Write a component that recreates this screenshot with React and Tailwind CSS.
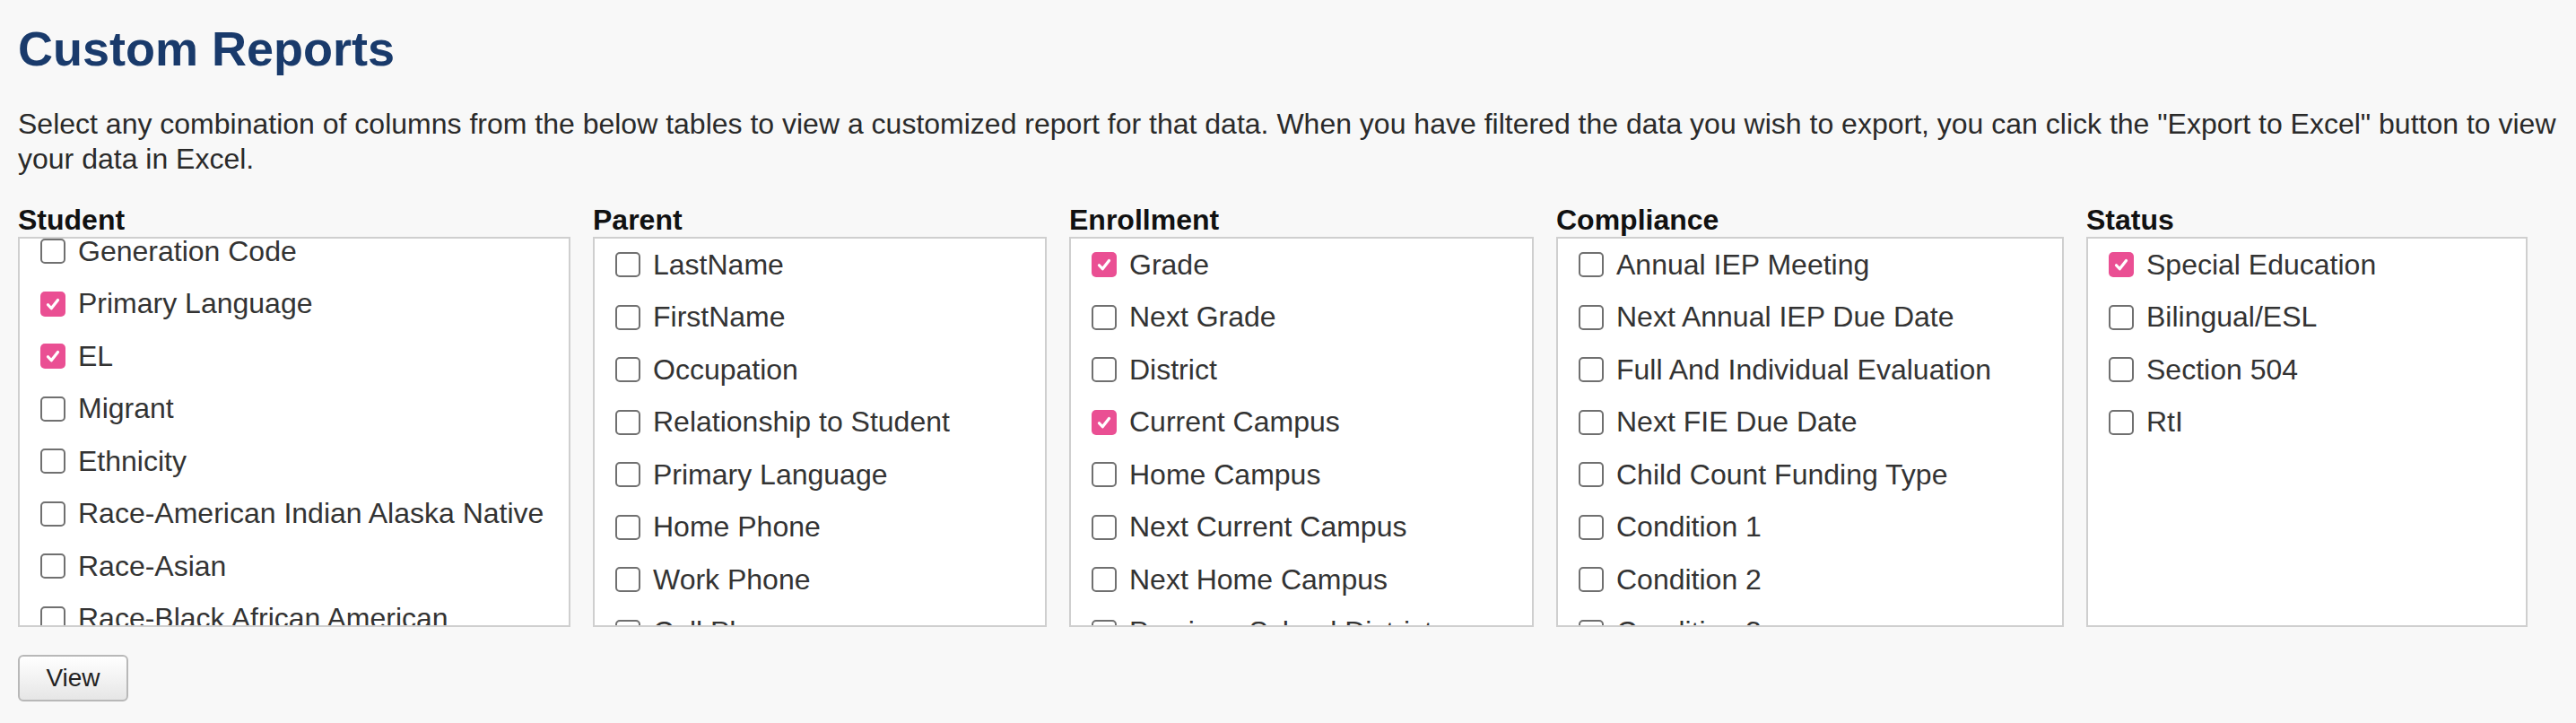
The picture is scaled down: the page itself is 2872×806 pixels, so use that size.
const columns = [
  {
    title: 'Student',
    width: 'w-[616px]',
    scrolled: true,
    items: [
      ['Generation Code', false],
      ['Primary Language', true],
      ['EL', true],
      ['Migrant', false],
      ['Ethnicity', false],
      ['Race-American Indian Alaska Native', false],
      ['Race-Asian', false],
      ['Race-Black African American', false],
      ['Race-Native Hawaiian Pacific Islander', false],
      ['Race-White', false],
    ],
  },
  {
    title: 'Parent',
    width: 'w-[506px]',
    items: [
      ['LastName', false],
      ['FirstName', false],
      ['Occupation', false],
      ['Relationship to Student', false],
      ['Primary Language', false],
      ['Home Phone', false],
      ['Work Phone', false],
      ['Cell Phone', false],
      ['Email', false],
    ],
  },
  {
    title: 'Enrollment',
    width: 'w-[518px]',
    items: [
      ['Grade', true],
      ['Next Grade', false],
      ['District', false],
      ['Current Campus', true],
      ['Home Campus', false],
      ['Next Current Campus', false],
      ['Next Home Campus', false],
      ['Previous School District', false],
      ['Entry Date', false],
    ],
  },
  {
    title: 'Compliance',
    width: 'w-[566px]',
    items: [
      ['Annual IEP Meeting', false],
      ['Next Annual IEP Due Date', false],
      ['Full And Individual Evaluation', false],
      ['Next FIE Due Date', false],
      ['Child Count Funding Type', false],
      ['Condition 1', false],
      ['Condition 2', false],
      ['Condition 3', false],
      ['Condition 4', false],
    ],
  },
  {
    title: 'Status',
    width: 'w-[492px]',
    items: [
      ['Special Education', true],
      ['Bilingual/ESL', false],
      ['Section 504', false],
      ['RtI', false],
    ],
  },
];

function Check({ checked }) {
  if (checked) {
    return (
      <span className="flex h-[28px] w-[28px] shrink-0 items-center justify-center rounded-[5px] bg-[#ea4f93]">
        <svg viewBox="0 0 16 16" className="h-[20px] w-[20px]" fill="none" stroke="white" strokeWidth="2.6" strokeLinecap="round" strokeLinejoin="round">
          <path d="M3.6 8.6l3 3.2 5.8-7.4" />
        </svg>
      </span>
    );
  }
  return <span className="h-[28px] w-[28px] shrink-0 rounded-[5px] border-2 border-[#707070] bg-white" />;
}

function Column({ col }) {
  return (
    <div className={col.width}>
      <h3 className="text-[32px] font-bold leading-[37px] text-[#111]">{col.title}</h3>
      <div className="h-[435px] overflow-hidden border-2 border-[#cfcfcf] bg-white">
        {/* student list is scrolled down a little in the original */}
        <div className={col.scrolled ? '-mt-[15px]' : ''}>
          {col.items.map(([label, checked]) => (
            <label key={label} className="flex h-[58.5px] items-center gap-[14px] whitespace-nowrap pl-[23px] text-[32px] leading-[37px] text-[#333]">
              <Check checked={checked} />
              {label}
            </label>
          ))}
        </div>
      </div>
    </div>
  );
}

export default function App() {
  return (
    <div className="min-h-screen bg-[#f8f8f8] px-[20px] pt-[24px] font-['Liberation_Sans',Arial,sans-serif]">
      <h1 className="text-[54px] font-bold leading-[60px] text-[#193a6b]">Custom Reports</h1>
      <p className="mt-[35px] w-[2850px] whitespace-nowrap text-[32px] leading-[38.5px] text-[#2a2a2a]">
        Select any combination of columns from the below tables to view a customized report for that data. When you have filtered the data you wish to export, you can click the "Export to Excel" button to view
        <br />
        your data in Excel.
      </p>

      <div className="mt-[31px] flex gap-[25px]">
        {columns.map(col => (
          <Column key={col.title} col={col} />
        ))}
      </div>

      <button className="mt-[31px] h-[52px] w-[123px] rounded-[6px] border-2 border-[#b8b8b8] bg-linear-to-b from-white to-[#e6e6e6] text-[28px] text-[#222]">
        View
      </button>
    </div>
  );
}
